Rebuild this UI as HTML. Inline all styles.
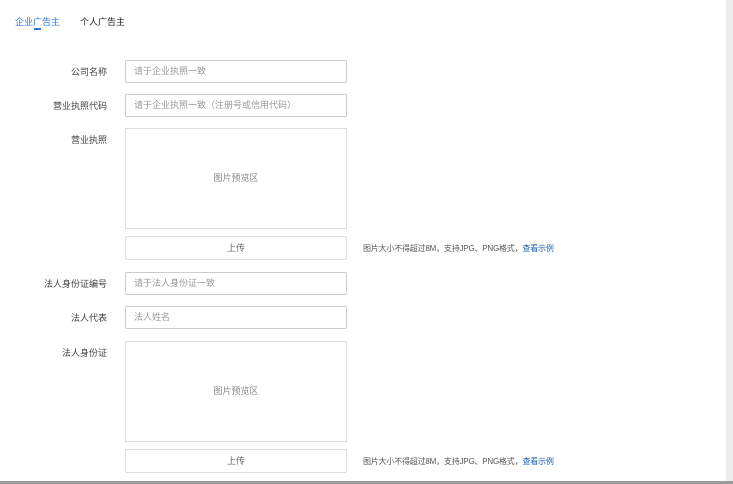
<!DOCTYPE html>
<html><head><meta charset="utf-8"><style>
*{margin:0;padding:0;box-sizing:border-box}
body{width:733px;height:484px;background:#fff;position:relative;overflow:hidden;font-family:"Liberation Sans","Noto Sans CJK SC",sans-serif;font-size:9px;color:#333}
.a{position:absolute}
.lbl{position:absolute;right:626px;text-align:right;white-space:nowrap;color:#444}
.in{position:absolute;left:125px;width:222px;height:23px;border:1px solid #ccc;border-radius:2px;color:#999;padding-left:8px;line-height:21px}
.box{position:absolute;left:125px;width:222px;height:101px;border:1px solid #ddd;color:#888;text-align:center;line-height:99px}
.btn{position:absolute;left:125px;width:222px;height:24px;border:1px solid #ddd;border-radius:2px;color:#666;text-align:center;line-height:22px}
.tip{position:absolute;left:363px;color:#555;font-size:8px;letter-spacing:-0.2px}
.tip span{color:#1a5fb4}
</style></head><body>
<div class="a" style="left:15px;top:15px;color:#2e7ad8">企业广告主</div>
<div class="a" style="left:34px;top:28px;width:7px;height:2px;background:#2e7ad8"></div>
<div class="a" style="left:80px;top:15px;color:#222">个人广告主</div>

<div class="lbl" style="top:65px">公司名称</div>
<div class="in" style="top:60px">请于企业执照一致</div>
<div class="lbl" style="top:99px">营业执照代码</div>
<div class="in" style="top:94px">请于企业执照一致（注册号或信用代码）</div>
<div class="lbl" style="top:133px">营业执照</div>
<div class="box" style="top:128px">图片预览区</div>
<div class="btn" style="top:236px">上传</div>
<div class="tip" style="top:243px">图片大小不得超过8M，支持JPG、PNG格式，<span>查看示例</span></div>
<div class="lbl" style="top:277px">法人身份证编号</div>
<div class="in" style="top:272px">请于法人身份证一致</div>
<div class="lbl" style="top:311px">法人代表</div>
<div class="in" style="top:306px">法人姓名</div>
<div class="lbl" style="top:346px">法人身份证</div>
<div class="box" style="top:341px">图片预览区</div>
<div class="btn" style="top:449px">上传</div>
<div class="tip" style="top:456px">图片大小不得超过8M，支持JPG、PNG格式，<span>查看示例</span></div>

<div class="a" style="left:726px;top:0;width:7px;height:484px;background:#ececec"></div>
<div class="a" style="left:0;top:481px;width:733px;height:3px;background:#9a9a9a"></div>
</body></html>
